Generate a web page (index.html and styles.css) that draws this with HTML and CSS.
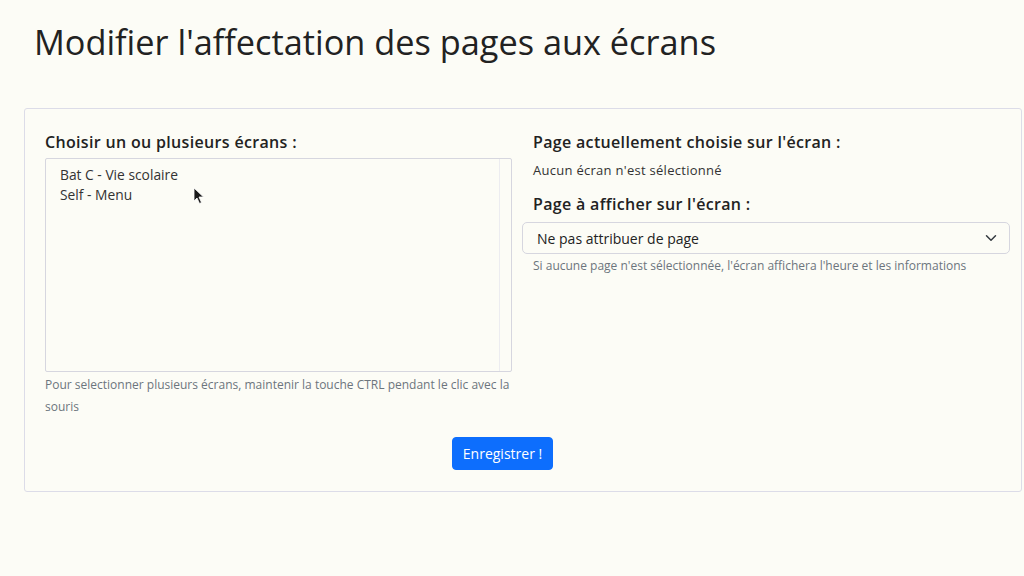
FILE: index.html
```html
<!DOCTYPE html>
<html lang="fr">
<head>
<meta charset="utf-8">
<title>Modifier l'affectation des pages aux écrans</title>
<link rel="stylesheet" href="styles.css">
</head>
<body>
<h1 class="title">Modifier l'affectation des pages aux écrans</h1>
<form class="card">
  <div class="cols">
    <div class="col-left">
      <label class="label" for="ecrans">Choisir un ou plusieurs écrans :</label>
      <div class="listbox" id="ecrans">
        <div class="option">Bat C - Vie scolaire</div>
        <div class="option">Self - Menu</div>
        <div class="scrolltrack"></div>
        <svg class="cursor" width="12" height="18" viewBox="0 0 12 18"><path d="M1 1 L1 14 L4 11 L6.5 16.5 L8.5 15.5 L6 10 L10.5 10 Z" fill="#1a1a1a" stroke="#fff" stroke-width="0.8"/></svg>
      </div>
      <p class="help help-left">Pour selectionner plusieurs écrans, maintenir la touche CTRL pendant le clic avec la souris</p>
    </div>
    <div class="col-right">
      <div class="label pad">Page actuellement choisie sur l'écran :</div>
      <div class="current pad">Aucun écran n'est sélectionné</div>
      <label class="label pad label2" for="page">Page à afficher sur l'écran :</label>
      <div class="select" id="page">
        <span>Ne pas attribuer de page</span>
        <svg width="12" height="12" viewBox="0 0 16 16"><path d="M2 5 L8 11 L14 5" fill="none" stroke="#343a40" stroke-width="2" stroke-linecap="round" stroke-linejoin="round"/></svg>
      </div>
      <p class="help help-right pad">Si aucune page n'est sélectionnée, l'écran affichera l'heure et les informations</p>
    </div>
  </div>
  <div class="actions">
    <button type="button" class="btn">Enregistrer !</button>
  </div>
</form>
</body>
</html>
```
FILE: styles.css
```css
* { box-sizing: border-box; }
html, body { margin: 0; padding: 0; }
body {
  background: #fcfcf6;
  color: #212529;
  font-family: "Open Sans", "Noto Sans", sans-serif;
  width: 1024px;
  height: 576px;
  overflow: hidden;
}
.title {
  margin: 0;
  padding: 19px 0 0 34px;
  font-size: 34.3px;
  font-weight: 400;
  line-height: 46px;
  color: #222;
}
.card {
  margin: 43px 0 0 24px;
  width: 998px;
  height: 384px;
  border: 1px solid #dcdce8;
  border-radius: 3px;
  padding: 21px 12px 0 20px;
}
.cols {
  display: grid;
  grid-template-columns: 467px 488px;
  column-gap: 10px;
}
.label {
  display: block;
  font-size: 16px;
  font-weight: 600;
  line-height: 24px;
  letter-spacing: 0.33px;
  color: #222;
}
.pad { padding-left: 11px; }
.listbox {
  position: relative;
  margin-top: 4px;
  height: 214px;
  border: 1px solid #d6d6df;
  border-radius: 2px;
  padding: 6px 14px;
  font-size: 13.8px;
  line-height: 20px;
  color: #333;
}
.scrolltrack {
  position: absolute;
  top: 0; right: 0; bottom: 0;
  width: 12px;
  border-left: 1px solid #ececf0;
}
.cursor { position: absolute; left: 147px; top: 28px; }
.help {
  margin: 0;
  font-size: 12px;
  line-height: 22px;
  color: #6c757d;
}
.help-left { margin-top: 2px; }
.current {
  margin-top: 5px;
  font-size: 13px;
  line-height: 22px;
  letter-spacing: 0.28px;
  color: #333;
}
.label2 { margin-top: 11px; }
.select {
  margin-top: 6px;
  height: 32px;
  border: 1px solid #d6d6df;
  border-radius: 5px;
  display: flex;
  align-items: center;
  justify-content: space-between;
  padding: 0 12px 0 14px;
  font-size: 14px;
  color: #222;
}
.help-right { margin-top: 2px; line-height: 20px; }
.actions {
  display: flex;
  justify-content: center;
  margin-top: 19px;
  padding-right: 49px;
}
.btn {
  font-family: inherit;
  background: #0d6efd;
  color: #fff;
  border: 1px solid #0d6efd;
  border-radius: 4px;
  height: 33px;
  padding: 0 10px;
  font-size: 14px;
}
```
